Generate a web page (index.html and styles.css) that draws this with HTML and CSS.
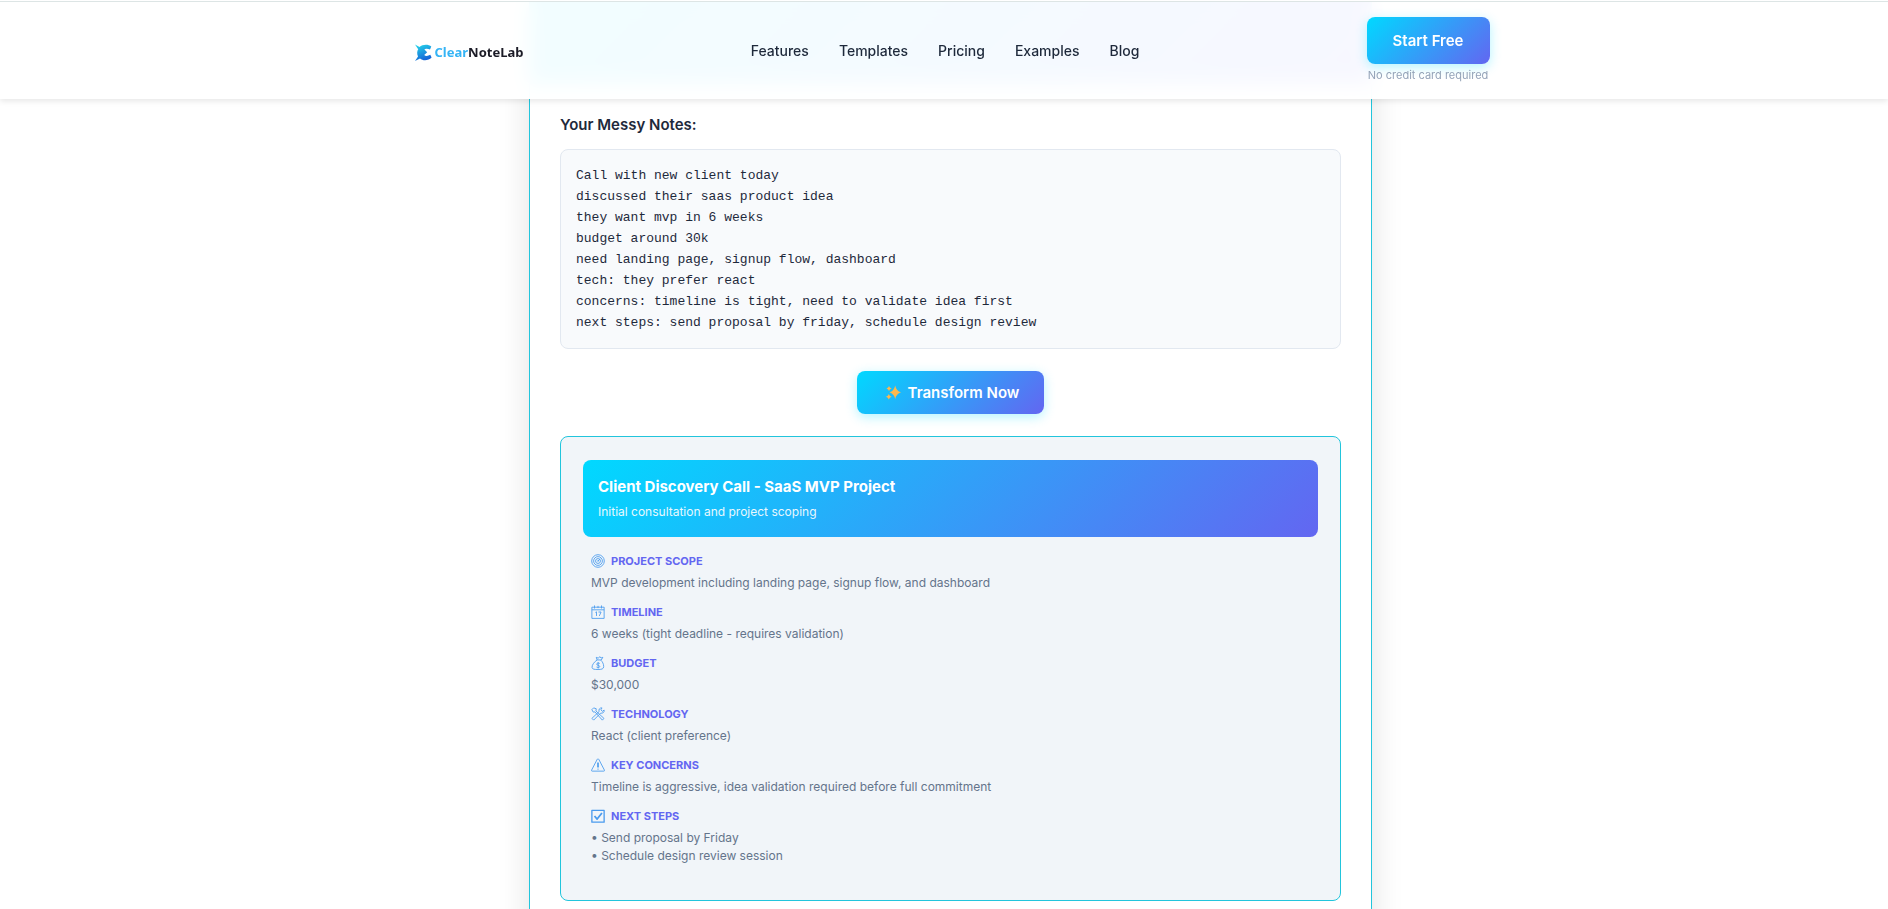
FILE: index.html
```html
<!DOCTYPE html>
<html lang="en">
<head>
  <meta charset="UTF-8" />
  <meta name="viewport" content="width=device-width, initial-scale=1.0"/>
  <title>ClearNoteLab</title>
  <link rel="stylesheet" href="styles.css">
</head>
<body>

  <header class="header">
    <div class="header-container">
      <a href="#" class="logo">
        <svg class="logo-mark" viewBox="0 0 17 17" fill="none" aria-hidden="true">
          <defs>
            <linearGradient id="logo-gradient" x1="0" y1="0" x2="0.4" y2="1">
              <stop offset="0" stop-color="#25dcea"/>
              <stop offset="1" stop-color="#1565d8"/>
            </linearGradient>
          </defs>
          <path d="M0 0.500L4.500 3C7.500 0.200 13.500 0 16.300 2.600L15 5.600C13 4.400 10.200 4.400 9.400 5.600L12.200 8.300L9.200 11C10.500 12.400 13 12.200 15.300 10.800L16.600 13.400C13.500 16.700 8 17 5 14.400L0 17L3 12.400C1.800 9.800 2 7.200 3.200 5.200Z" fill="url(#logo-gradient)"/>
        </svg>
        <span class="logo-text"><span class="logo-clear">Clear</span>NoteLab</span>
      </a>

      <nav class="nav">
        <a href="#features">Features</a>
        <a href="#templates">Templates</a>
        <a href="#pricing">Pricing</a>
        <a href="#examples">Examples</a>
        <a href="#blog">Blog</a>
      </nav>

      <div class="header-cta">
        <button type="button" class="btn btn-start">Start Free</button>
        <span class="cta-note">No credit card required</span>
      </div>
    </div>
  </header>

  <main class="demo-card">
    <div class="demo-header"></div>

    <div class="demo-content">
      <h3 class="demo-label">Your Messy Notes:</h3>
      <pre class="messy-notes">Call with new client today
discussed their saas product idea
they want mvp in 6 weeks
budget around 30k
need landing page, signup flow, dashboard
tech: they prefer react
concerns: timeline is tight, need to validate idea first
next steps: send proposal by friday, schedule design review</pre>

      <button type="button" class="btn btn-transform">
        <svg class="sparkles" viewBox="0 0 16 16" fill="#ffb84d" aria-hidden="true">
          <path d="M9.800 0.500Q11 6.300 16 7.800Q11 9.300 9.800 15Q8.600 9.300 3.600 7.800Q8.600 6.300 9.800 0.500Z"/>
          <path d="M3.200 1Q3.800 3.100 6 3.700Q3.800 4.300 3.200 6.400Q2.600 4.300 0.500 3.700Q2.600 3.100 3.200 1Z"/>
          <path d="M3 9.500Q3.600 11.900 6 12.500Q3.600 13.100 3 15.500Q2.400 13.100 0 12.500Q2.400 11.900 3 9.500Z"/>
        </svg>
        Transform Now
      </button>

      <div class="result">
        <div class="result-header">
          <h4>Client Discovery Call - SaaS MVP Project</h4>
          <p>Initial consultation and project scoping</p>
        </div>

        <section class="result-section">
          <h5>
            <svg class="icon" viewBox="0 0 16 16" aria-hidden="true">
              <circle cx="8" cy="8" r="7.200"/>
              <circle cx="8" cy="8" r="5"/>
              <circle cx="8" cy="8" r="2.800"/>
              <path d="M8 8L10.500 5.500M8 7V9"/>
            </svg>
            PROJECT SCOPE
          </h5>
          <p>MVP development including landing page, signup flow, and dashboard</p>
        </section>

        <section class="result-section">
          <h5>
            <svg class="icon" viewBox="0 0 16 16" aria-hidden="true">
              <path d="M1 2.500H15V15.300H1ZM1 5.500H15M4 0.500V4M12 0.500V4M8 1V3.500"/>
              <path d="M5 8.500L6.300 7.800V12.500M8.500 8H11.500L9.500 12.500"/>
            </svg>
            TIMELINE
          </h5>
          <p>6 weeks (tight deadline - requires validation)</p>
        </section>

        <section class="result-section">
          <h5>
            <svg class="icon" viewBox="0 0 16 16" aria-hidden="true">
              <path d="M7 4.500L6 1.500L8.500 2.500L10 0.700L11.500 2.300L13.500 1.500L11.500 5M7 4.500H11.500M7 4.500C4 6.500 1 10 1.200 13C1.500 15.300 4 15.400 8 15.400C12 15.400 14.500 15 14.500 12C14.500 9 13 6.500 11.500 5"/>
              <path d="M10 8.500C8.500 7.600 6.500 8 6.500 9.400C6.500 11 10 10.300 10 12C10 13.400 7.500 13.500 6.300 12.600M8.200 7V14.300"/>
            </svg>
            BUDGET
          </h5>
          <p>$30,000</p>
        </section>

        <section class="result-section">
          <h5>
            <svg class="icon" viewBox="0 0 16 16" aria-hidden="true">
              <path d="M1 3L3 1L6 2L5.600 4.500L14.800 13L13 15L4.500 5.600L2.500 5.800Z"/>
              <path d="M15 3.500L13 5L11.300 3.200L12.600 1C9.800 0.700 8.500 3 9.300 5.200L1 13L3 15L11 7C13.500 7.500 15.500 6 15 3.500Z"/>
            </svg>
            TECHNOLOGY
          </h5>
          <p>React (client preference)</p>
        </section>

        <section class="result-section">
          <h5>
            <svg class="icon" viewBox="0 0 16 16" aria-hidden="true">
              <path d="M8 1Q8.700 1 9 1.700L15.400 14Q15.600 15 14.700 15H1.300Q0.400 15 0.600 14L7 1.700Q7.300 1 8 1Z"/>
              <path d="M7.500 5.500H8.500V10.500H7.500ZM8 12V13.500"/>
            </svg>
            KEY CONCERNS
          </h5>
          <p>Timeline is aggressive, idea validation required before full commitment</p>
        </section>

        <section class="result-section">
          <h5>
            <svg class="icon icon-check" viewBox="0 0 16 16" aria-hidden="true">
              <path d="M1 1.500H15V15H1Z"/>
              <path class="tick" d="M4 8L7 11.500L12.500 4.500"/>
            </svg>
            NEXT STEPS
          </h5>
          <p>• Send proposal by Friday<br>• Schedule design review session</p>
        </section>
      </div>
    </div>
  </main>

</body>
</html>
```
FILE: styles.css
```css
* {
  box-sizing: border-box;
  margin: 0;
  padding: 0;
}

body {
  font-family: Inter, 'Liberation Sans', sans-serif;
  background: #ffffff;
  color: #1e293b;
  padding-left: 13px;
  overflow-x: hidden;
}

/* Header */
.header {
  position: fixed;
  top: 0;
  left: 0;
  right: 0;
  z-index: 10;
  padding-left: 13px;
  border-top: 1px solid #ffffff;
  background: rgba(255, 255, 255, 0.95);
  backdrop-filter: blur(10px);
  box-shadow: inset 0 1px 0 #dde5e5, 0 2px 6px rgba(0, 0, 0, 0.1);
}

.header-container {
  max-width: 1078px;
  margin: 0 auto;
  padding: 16px 0;
  display: flex;
  align-items: center;
  justify-content: space-between;
}

.logo {
  display: flex;
  align-items: center;
  gap: 3px;
  padding-top: 4px;
  padding-left: 3px;
  text-decoration: none;
}

.logo-mark {
  width: 17px;
  height: 17px;
}

.logo-text {
  font-family: 'Noto Sans', sans-serif;
  font-size: 13px;
  font-weight: 700;
  line-height: 20px;
  color: #1b1b26;
}

.logo-clear {
  color: #35b4f5;
}

.nav {
  display: flex;
  gap: 30px;
}

.nav a {
  font-size: 14px;
  font-weight: 500;
  color: #1e293b;
  text-decoration: none;
}

.header-cta {
  display: flex;
  flex-direction: column;
  align-items: center;
}

.cta-note {
  margin-top: 3px;
  font-size: 11px;
  line-height: 16px;
  color: #94a3b8;
}

/* Buttons */
.btn {
  font-family: inherit;
  font-size: 15px;
  font-weight: 600;
  color: #ffffff;
  background: linear-gradient(135deg, #00d9ff, #6366f1);
  border: none;
  border-radius: 8px;
  box-shadow: 0 3px 12px rgba(0, 217, 255, 0.3);
  cursor: pointer;
}

.btn-start {
  width: 100%;
  padding: 14px 26px;
  line-height: 19px;
}

.btn-transform {
  display: flex;
  align-items: center;
  gap: 7px;
  margin: 22px auto;
  padding: 12px 25px 12px 29px;
  line-height: 19px;
}

.sparkles {
  width: 15px;
  height: 15px;
}

/* Demo card */
.demo-card {
  max-width: 843px;
  margin: 0 auto;
  background: #ffffff;
  border: 1px solid #22c5dc;
  border-top: none;
  box-shadow: 0 8px 30px rgba(0, 0, 0, 0.12);
}

.demo-header {
  height: 84px;
  background: linear-gradient(135deg, #00d9ff, #6366f1);
}

.demo-content {
  padding: 30px;
}

.demo-label {
  margin-bottom: 14px;
  font-size: 15px;
  font-weight: 600;
  line-height: 21px;
}

.messy-notes {
  padding: 15px;
  font-family: 'Liberation Mono', monospace;
  font-size: 13px;
  line-height: 21px;
  white-space: pre-wrap;
  background: #f8fafc;
  border: 1px solid #e2e8f0;
  border-radius: 8px;
}

.result {
  padding: 23px 22px 35px;
  background: #f1f5f9;
  border: 1px solid #22c5dc;
  border-radius: 8px;
}

.result-header {
  padding: 15px 15px 16px;
  margin-bottom: 15px;
  color: #ffffff;
  background: linear-gradient(135deg, #00d9ff, #6366f1);
  border-radius: 8px;
}

.result-header h4 {
  margin-bottom: 4px;
  font-size: 15px;
  font-weight: 700;
  line-height: 24px;
}

.result-header p {
  font-size: 12px;
  line-height: 18px;
  opacity: 0.9;
}

.result-section {
  padding: 0 8px;
  margin-bottom: 11px;
}

.result-section:last-child {
  margin-bottom: 0;
}

.result-section h5 {
  display: flex;
  align-items: center;
  gap: 6px;
  margin-bottom: 4px;
  font-size: 11px;
  font-weight: 700;
  line-height: 18px;
  color: #6366f1;
}

.result-section p {
  font-size: 12px;
  line-height: 18px;
  color: #64748b;
}

.icon {
  width: 14px;
  height: 14px;
  fill: none;
  stroke: #4a9bee;
  stroke-width: 1;
  stroke-linejoin: round;
}

.icon-check {
  stroke-width: 1.5;
}

.tick {
  stroke-width: 2;
}

@media (max-width: 900px) {
  .nav {
    display: none;
  }

  .header-container {
    padding: 16px;
  }
}
```
